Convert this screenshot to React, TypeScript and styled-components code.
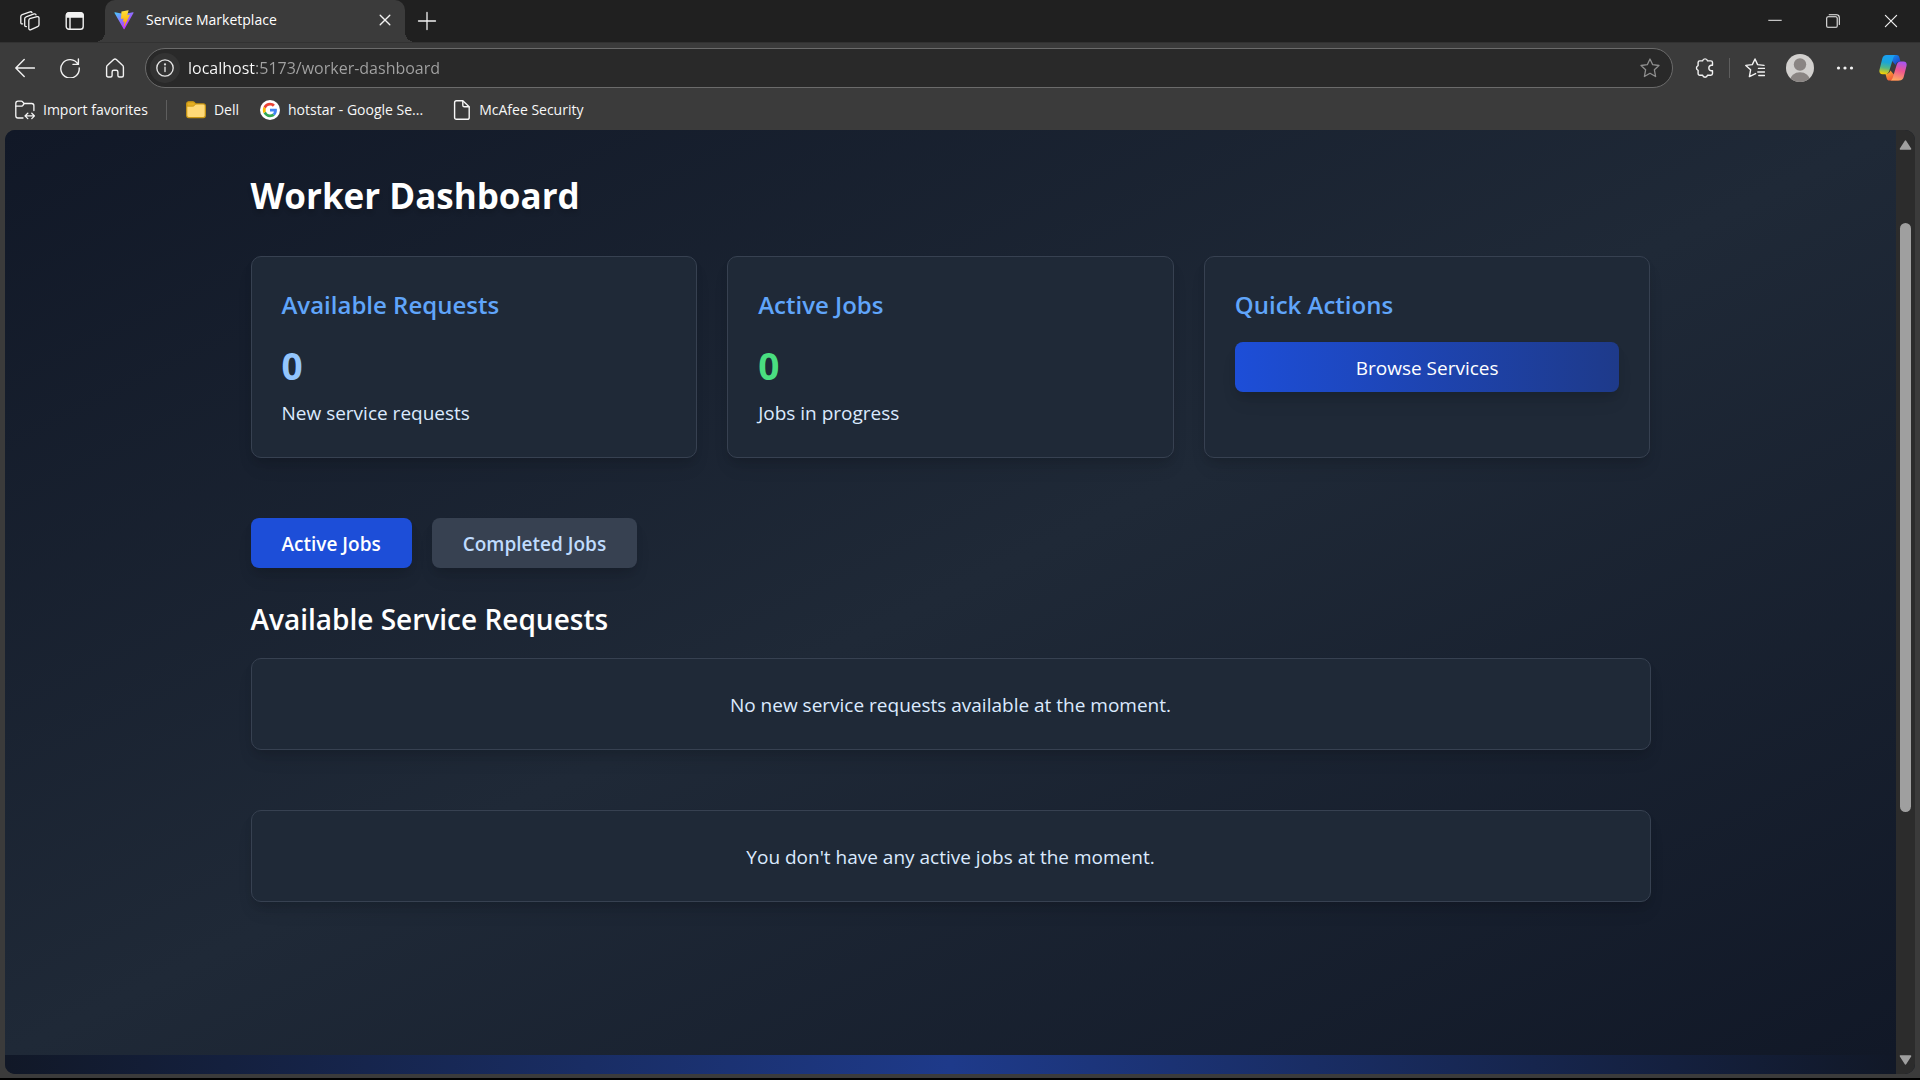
import React, { useState } from "react";
import styled, { createGlobalStyle, css } from "styled-components";

const GlobalStyle = createGlobalStyle`
  *, *::before, *::after { box-sizing: border-box; }
  body { margin: 0; background: #000; }
  h1, h2, p { margin: 0; }
  button, input { font: inherit; color: inherit; }
`;

const Window = styled.div`
  display: flex;
  flex-direction: column;
  min-height: 100vh;
  background: #3b3b3b;
  border-bottom: 2px solid #000;
  color: #fff;
  font-family: "Open Sans", "Noto Sans", sans-serif;
`;

/* ---------- browser chrome ---------- */

const TitleBar = styled.header`
  display: flex;
  align-items: stretch;
  height: 42px;
  padding-left: 7px;
  background: #202020;
`;

const IconButton = styled.button<{ $w?: number; $dim?: boolean }>`
  display: flex;
  flex: none;
  align-items: center;
  justify-content: center;
  width: ${(p) => p.$w ?? 45}px;
  padding: 0;
  border: 0;
  background: none;
  color: ${(p) => (p.$dim ? "#8f8f8f" : "#f2f2f2")};
`;

const Tab = styled.div`
  position: relative;
  display: flex;
  align-items: center;
  gap: 12px;
  width: 300px;
  margin-left: 8px;
  padding: 0 8px 2px 9px;
  border-radius: 10px 10px 0 0;
  background: #3b3b3b;
  font-size: 14px;
  line-height: 20px;

  &::before,
  &::after {
    content: "";
    position: absolute;
    bottom: 0;
    width: 10px;
    height: 10px;
  }
  &::before {
    left: -10px;
    background: radial-gradient(circle at 0 0, #202020 10px, #3b3b3b 10px);
  }
  &::after {
    right: -10px;
    background: radial-gradient(circle at 100% 0, #202020 10px, #3b3b3b 10px);
  }
`;

const TabTitle = styled.span`
  flex: 1;
  white-space: nowrap;
`;

const WindowControls = styled.div`
  display: flex;
  margin-left: auto;
`;

const Toolbar = styled.div`
  display: flex;
  align-items: center;
  height: 52px;
  padding: 0 4px 1px 2px;
  border-top: 1px solid #323232;
`;

const AddressBar = styled.label`
  display: flex;
  flex: 1;
  align-items: center;
  height: 40px;
  margin: 0 8px;
  padding: 0 2px 0 4px;
  border: 1px solid #6b6b6b;
  border-radius: 20px;
  background: #292929;
`;

const SiteInfo = styled.button`
  display: flex;
  align-items: center;
  justify-content: center;
  width: 30px;
  height: 30px;
  padding: 0;
  border: 0;
  border-radius: 50%;
  background: #333;
  color: #e4e4e4;
`;

const AddressInput = styled.input`
  flex: 1;
  min-width: 0;
  margin-left: 8px;
  padding: 0;
  border: 0;
  outline: 0;
  background: linear-gradient(90deg, #fff 67px, #a3a3a3 67px);
  background-clip: text;
  -webkit-background-clip: text;
  -webkit-text-fill-color: transparent;
  color: #a3a3a3;
  font-size: 16px;
  line-height: 24px;
`;

const Divider = styled.span`
  flex: none;
  width: 1px;
  height: 20px;
  background: #5e5e5e;
`;

const Favorites = styled.nav`
  display: flex;
  align-items: center;
  height: 36px;
  padding: 0 15px 4px;
  font-size: 14px;
  line-height: 20px;
`;

const Favorite = styled.a<{ $before?: number }>`
  display: flex;
  align-items: center;
  gap: 8px;
  margin-left: ${(p) => p.$before ?? 0}px;
  color: #f7f7f7;
  text-decoration: none;
  white-space: nowrap;
`;

const FavoriteDivider = styled(Divider)`
  margin-left: 18px;
`;

/* ---------- page ---------- */

const Viewport = styled.div`
  display: flex;
  flex: 1;
  margin: 0 5px 4px;
  overflow: hidden;
  border-radius: 10px;
  background: #111827;
`;

const Page = styled.div`
  display: flex;
  flex: 1;
  flex-direction: column;
`;

const Main = styled.main`
  flex: 1;
  padding: 42px 40px;
  background: linear-gradient(to bottom right, #111827, #1f2937, #111827);
`;

const Container = styled.div`
  display: flex;
  flex-direction: column;
  max-width: 1400px;
  margin: 0 auto;
`;

const PageFooter = styled.footer`
  height: 19px;
  background: linear-gradient(to right, #111827, #1e3a8a, #111827);
`;

const panel = css`
  padding: 30px 30px 28px;
  border: 1px solid #374151;
  border-radius: 10px;
  background: #1f2937;
  box-shadow: 0 12px 18px -4px rgba(0, 0, 0, 0.1), 0 5px 8px -2px rgba(0, 0, 0, 0.1);
`;

const Title = styled.h1`
  margin-bottom: 36px;
  font-size: 35px;
  font-weight: 700;
  line-height: 48px;
  text-shadow: 0 4px 4px rgba(0, 0, 0, 0.15);
`;

const Cards = styled.div`
  display: grid;
  grid-template-columns: repeat(3, 1fr);
  gap: 30px;
  margin-bottom: 60px;
`;

const Card = styled.section`
  ${panel}
`;

const CardTitle = styled.h2`
  margin-bottom: 19px;
  color: #60a5fa;
  font-size: 24px;
  font-weight: 600;
  line-height: 36px;
`;

const Count = styled.p<{ $color: string }>`
  margin-bottom: 7px;
  color: ${(p) => p.$color};
  font-size: 37px;
  font-weight: 700;
  line-height: 48px;
`;

const Body = styled.p`
  color: #dbeafe;
  font-size: 19px;
  line-height: 32px;
`;

const actionButton = css`
  height: 50px;
  padding: 2px 31px 0;
  border: 0;
  border-radius: 8px;
  font-size: 19px;
  line-height: 30px;
  box-shadow: 0 12px 18px -4px rgba(0, 0, 0, 0.1), 0 5px 8px -2px rgba(0, 0, 0, 0.1);
`;

const BrowseButton = styled.button`
  ${actionButton}
  width: 100%;
  background: linear-gradient(to right, #1d4ed8, #1e3a8a);
  color: #fff;
`;

const Tabs = styled.div`
  display: flex;
  gap: 20px;
  margin-bottom: 30px;
`;

const TabButton = styled.button<{ $active: boolean }>`
  ${actionButton}
  background: ${(p) => (p.$active ? "#1d4ed8" : "#374151")};
  color: ${(p) => (p.$active ? "#fff" : "#bfdbfe")};
  font-weight: 600;
`;

const SectionTitle = styled.h2`
  margin-bottom: 18px;
  font-size: 28px;
  font-weight: 600;
  line-height: 42px;
`;

const EmptyPanel = styled.div`
  ${panel}
  text-align: center;

  & + & {
    margin-top: 60px;
  }
`;

const ScrollTrack = styled.div`
  display: flex;
  flex: none;
  flex-direction: column;
  align-items: center;
  width: 19px;
  padding: 10px 0 9px;
  background: #2c2c2c;
`;

const ScrollRun = styled.div`
  display: flex;
  flex: 1;
  flex-direction: column;
  align-items: center;
  margin: 5px 0;
`;

const ScrollSpace = styled.span<{ $grow: number }>`
  flex: ${(p) => p.$grow} 0 0;
`;

const ScrollThumb = styled.span`
  flex: 589 0 0;
  width: 11px;
  border-radius: 6px;
  background: #9f9f9f;
`;

/* ---------- icons ---------- */

type StrokeProps = { size?: number; width?: number; children: React.ReactNode };

const Stroke = ({ size = 20, width = 1.4, children }: StrokeProps) => (
  <svg
    width={size}
    height={size}
    viewBox="0 0 20 20"
    fill="none"
    stroke="currentColor"
    strokeWidth={width}
    strokeLinecap="round"
    strokeLinejoin="round"
    aria-hidden="true"
  >
    {children}
  </svg>
);

const WorkspacesIcon = () => (
  <Stroke width={1.3}>
    <path d="M9.8 7.6l7.2-1.9c1.1-.3 2 .3 2 1.4v6.6c0 .9-.5 1.6-1.4 1.9l-6.6 3.1c-1.1.5-2.200-.1-2.200-1.300V9.400c0-.9.300-1.500 1-1.800z" />
    <path d="M6.4 15.600c-1.100.2-1.700-.4-1.700-1.400V7.800c0-1 .5-1.700 1.400-2l8-2.900c1-.3 1.700.1 1.900 1" />
    <path d="M2.600 12.900C1.400 13.100.8 12.500.8 11.400V5.600c0-1 .5-1.700 1.400-2L10 .9c1-.3 1.700 0 2 .8" />
  </Stroke>
);

const TabActionsIcon = () => (
  <Stroke width={1.4}>
    <rect x="1.2" y="1.7" width="17" height="16.6" rx="2.8" />
    <path d="M2 3.500C2 2.500 3 2 4 2h11.500c1.500 0 2.500.7 2.500 2.500V6H2z" fill="currentColor" />
    <path d="M5 6v12" />
  </Stroke>
);

const ViteIcon = () => (
  <svg width="20" height="20" viewBox="0 0 410 404" aria-hidden="true">
    <defs>
      <linearGradient id="viteA" x1="6" y1="33" x2="235" y2="344" gradientUnits="userSpaceOnUse">
        <stop stopColor="#41d1ff" />
        <stop offset="1" stopColor="#bd34fe" />
      </linearGradient>
      <linearGradient id="viteB" x1="194" y1="9" x2="236" y2="293" gradientUnits="userSpaceOnUse">
        <stop stopColor="#ffea83" />
        <stop offset=".08" stopColor="#ffdd35" />
        <stop offset="1" stopColor="#ffa800" />
      </linearGradient>
    </defs>
    <path
      fill="url(#viteA)"
      d="M399.641 59.525L215.643 388.545C211.844 395.338 202.084 395.378 198.228 388.618L10.582 59.556C6.381 52.190 12.680 43.267 21.028 44.759L205.223 77.682C206.398 77.892 207.601 77.890 208.776 77.676L389.119 44.806C397.439 43.289 403.768 52.143 399.641 59.525Z"
    />
    <path
      fill="url(#viteB)"
      d="M292.965 1.574L156.801 28.255C154.563 28.694 152.906 30.590 152.771 32.866L144.395 174.330C144.198 177.662 147.258 180.248 150.510 179.498L188.420 170.749C191.967 169.931 195.172 173.055 194.443 176.622L183.180 231.775C182.422 235.487 185.907 238.661 189.532 237.560L212.947 230.446C216.577 229.344 220.065 232.527 219.297 236.242L201.398 322.875C200.278 328.294 207.486 331.249 210.492 326.603L212.500 323.500L323.454 102.072C325.312 98.365 322.108 94.137 318.036 94.923L279.014 102.454C275.347 103.161 272.227 99.746 273.262 96.158L298.731 7.867C299.767 4.273 296.636.855 292.965 1.574Z"
    />
  </svg>
);

const CloseIcon = ({ size = 12, width = 2.3 }: { size?: number; width?: number }) => (
  <Stroke size={size} width={width}>
    <path d="M2 2l16 16M18 2L2 18" />
  </Stroke>
);

const PlusIcon = () => (
  <Stroke width={1.3}>
    <path d="M10 1.500v17M1.500 10h17" />
  </Stroke>
);

const MinimizeIcon = () => (
  <Stroke size={14} width={1.4}>
    <path d="M1 9h18" />
  </Stroke>
);

const RestoreIcon = () => (
  <Stroke size={14} width={1.5}>
    <rect x="1" y="4" width="15" height="15" rx="2" />
    <path d="M4.500 1.200H15c2.500 0 4 1.500 4 4V15" />
  </Stroke>
);

const BackIcon = () => (
  <Stroke>
    <path d="M19.400 10H1M9.200 1.600L.8 10l8.400 8.400" />
  </Stroke>
);

const ReloadIcon = () => (
  <Stroke>
    <path d="M18 6.200A9.200 9.200 0 1 0 19.200 10M18.400 1v5.400H13" />
  </Stroke>
);

const HomeIcon = () => (
  <Stroke>
    <path d="M1.600 9.200c0-.8.300-1.400.9-1.900l6.200-5.800c.8-.7 1.800-.7 2.600 0l6.200 5.800c.6.5.9 1.100.9 1.900v8.300c0 .9-.6 1.500-1.500 1.500h-2.500c-.9 0-1.500-.6-1.500-1.500v-3.600c0-1-.7-1.700-1.700-1.700H8.800c-1 0-1.700.7-1.700 1.700v3.600c0 .9-.6 1.500-1.500 1.500H3.100c-.9 0-1.500-.6-1.500-1.500z" />
  </Stroke>
);

const InfoIcon = () => (
  <Stroke size={18} width={1.5}>
    <circle cx="10" cy="10" r="9.1" />
    <path d="M10 9v5" />
    <circle cx="10" cy="6.1" r=".5" fill="currentColor" />
  </Stroke>
);

const StarIcon = () => (
  <Stroke width={1.3}>
    <path d="M10 1l2.700 5.700 6.300.8-4.600 4.300 1.200 6.700L10 15.300l-5.600 3.200 1.200-6.700L1 7.500l6.300-.8z" />
  </Stroke>
);

const ExtensionIcon = () => (
  <Stroke>
    <path d="M4.800 2.900h2.800a2.500 2.500 0 0 1 4.900 0h3.300c1.100 0 1.700.7 1.700 1.700v2.700h-1.400a2.800 2.800 0 0 0 0 5.500h1.400v2.700c0 1-.6 1.700-1.700 1.700h-3.300a2.500 2.500 0 0 1-4.900 0H4.800c-1 0-1.700-.7-1.700-1.700v-3.200a2.500 2.500 0 0 1 0-4.700V4.600c0-1 .7-1.700 1.700-1.700z" />
  </Stroke>
);

const FavoritesListIcon = () => (
  <Stroke>
    <path d="M10.600 15.600l-6.200 3 1.200-6.800L.8 7.400l6.500-.8L10 1l2.600 5.600 6.400.8" />
    <path d="M13.500 10.400h6M12.800 14h6.700M13.800 17.500h5.700" />
  </Stroke>
);

const AvatarIcon = () => (
  <svg width="28" height="28" viewBox="0 0 28 28" aria-hidden="true">
    <clipPath id="avatarClip">
      <circle cx="14" cy="14" r="14" />
    </clipPath>
    <g clipPath="url(#avatarClip)">
      <rect width="28" height="28" fill="#d2d0ce" />
      <circle cx="14" cy="10.5" r="6.2" fill="#8a8583" />
      <ellipse cx="14" cy="26.5" rx="10" ry="8.2" fill="#8a8583" />
    </g>
  </svg>
);

const MoreIcon = () => (
  <svg width="18" height="18" viewBox="0 0 18 18" fill="currentColor" aria-hidden="true">
    <circle cx="2.5" cy="9" r="1.6" />
    <circle cx="9" cy="9" r="1.6" />
    <circle cx="15.5" cy="9" r="1.6" />
  </svg>
);

const CopilotIcon = () => (
  <svg width="28" height="28" viewBox="0 0 28 28" aria-hidden="true">
    <defs>
      <linearGradient id="copA" x1="8" y1="2" x2="5" y2="20" gradientUnits="userSpaceOnUse">
        <stop stopColor="#1a9ff0" />
        <stop offset=".35" stopColor="#1aa5d8" />
        <stop offset=".65" stopColor="#52b788" />
        <stop offset="1" stopColor="#f7d000" />
      </linearGradient>
      <linearGradient id="copB" x1="23" y1="8" x2="18" y2="27" gradientUnits="userSpaceOnUse">
        <stop stopColor="#a855f0" />
        <stop offset=".45" stopColor="#ee5590" />
        <stop offset="1" stopColor="#ffac5c" />
      </linearGradient>
      <linearGradient id="copC" x1="15" y1="1" x2="21" y2="9" gradientUnits="userSpaceOnUse">
        <stop stopColor="#1687e8" />
        <stop offset="1" stopColor="#1e40c8" />
      </linearGradient>
      <linearGradient id="copD" x1="7" y1="20" x2="12" y2="27" gradientUnits="userSpaceOnUse">
        <stop stopColor="#f8a030" />
        <stop offset="1" stopColor="#f0503a" />
      </linearGradient>
    </defs>
    <path fill="url(#copC)" d="M8 1h9.500c1.500 0 2.400.9 2.800 2.300l1.200 4.200c-2.500 0-4.300 1-5 3.500z" />
    <path fill="url(#copD)" d="M20 26.600h-9.500c-1.500 0-2.400-.9-2.800-2.300L6.500 20c2.500 0 4.300-1 5-3.400z" />
    <path fill="url(#copA)" d="M7.500 1H17c-1.500.2-2.300 1.500-2.800 3l-4 13c-.6 2-2 3.200-3.900 3.200H3.500C1 20.200-.1 18.300.5 15.800L3.300 4.500C3.900 2.300 5.300 1 7.500 1z" />
    <path fill="url(#copB)" d="M20.500 26.600H11c1.500-.2 2.300-1.500 2.800-3l4-13c.6-2 2-3.100 3.900-3.100h2.800c2.500 0 3.600 1.900 3 4.400l-2.800 11.200c-.6 2.200-2 3.500-4.200 3.500z" />
  </svg>
);

const ImportIcon = () => (
  <Stroke width={1.3}>
    <path d="M8 18H3c-1.400 0-2.200-.8-2.200-2.200V3.400C.8 2 1.600 1.200 3 1.200h3.200c.7 0 1.200.3 1.600.8l1.300 1.500h7.600c1.400 0 2.200.8 2.200 2.200v4.800" />
    <path d="M1 6.200h5c.8 0 1.300-.2 1.800-.7l1.300-1.800M10.500 15.900h8.700M12.800 13.200L10 15.900l2.800 2.700M16.800 13.200l2.700 2.700-2.700 2.700" />
  </Stroke>
);

const FolderIcon = () => (
  <svg width="20" height="20" viewBox="0 0 20 20" aria-hidden="true">
    <path d="M.7 4c0-1.400.7-2.200 2-2.200h4.200c.7 0 1.200.3 1.600.8l1 1.300h7.800c1.300 0 2 .8 2 2v9.700c0 1.300-.7 2-2 2H2.700c-1.300 0-2-.7-2-2z" fill="#ffd977" stroke="#c99612" strokeWidth="1.2" />
    <path d="M1.200 6.200h5.600c.8 0 1.300-.3 1.700-.8l1-1.300-1.300-1.500c-.3-.2-.7-.4-1.200-.4H2.700c-1 0-1.500.6-1.500 1.600z" fill="#e5ae22" stroke="#c99612" strokeWidth=".8" />
  </svg>
);

const GoogleIcon = () => (
  <svg width="20" height="20" viewBox="0 0 20 20" aria-hidden="true">
    <circle cx="10" cy="10" r="10" fill="#fff" />
    <g transform="translate(2.8 2.8) scale(.6)">
      <path fill="#4285f4" d="M23.500 12.300c0-.9-.1-1.500-.2-2.200H12v4.500h6.500c-.1 1.100-.8 2.700-2.400 3.800l3.700 2.900c2.300-2.100 3.700-5.200 3.700-9z" />
      <path fill="#34a853" d="M12 24c3.200 0 6-1.100 7.900-2.900l-3.700-2.900c-1 .7-2.400 1.200-4.200 1.200-3.200 0-5.900-2.100-6.800-5L1.300 17.400C3.300 21.300 7.300 24 12 24z" />
      <path fill="#fbbc05" d="M5.200 14.400c-.2-.8-.4-1.600-.4-2.400s.1-1.600.4-2.400L1.300 6.600C.5 8.200 0 10.100 0 12s.5 3.800 1.300 5.400z" />
      <path fill="#ea4335" d="M12 4.700c2.300 0 3.800 1 4.700 1.800l3.400-3.300C18 1.200 15.200 0 12 0 7.300 0 3.300 2.700 1.300 6.600l3.900 3C6.100 6.800 8.800 4.700 12 4.700z" />
    </g>
  </svg>
);

const FileIcon = () => (
  <svg width="18" height="20" viewBox="0 0 18 20" fill="none" stroke="currentColor" strokeWidth="1.4" strokeLinejoin="round" aria-hidden="true">
    <path d="M3.500.8h6.300l6.400 6v10.600c0 1.200-.6 1.900-1.900 1.900H3.500c-1.300 0-1.900-.7-1.900-1.900V2.700C1.600 1.500 2.200.8 3.500.8z" />
    <path d="M9.800.8v4.400c0 1 .5 1.600 1.600 1.600h4.800" />
  </svg>
);

const ScrollArrow = ({ down = false }: { down?: boolean }) => (
  <svg width="13" height="10" viewBox="0 0 13 10" aria-hidden="true">
    <path
      d={down ? "M1.500 1h10L6.500 8.800z" : "M1.500 9h10L6.500 1.200z"}
      fill="#9f9f9f"
      stroke="#9f9f9f"
      strokeWidth="1.6"
      strokeLinejoin="round"
    />
  </svg>
);

/* ---------- app ---------- */

const BrowserChrome = () => (
  <>
    <TitleBar>
      <IconButton aria-label="Workspaces"><WorkspacesIcon /></IconButton>
      <IconButton aria-label="Tab actions menu"><TabActionsIcon /></IconButton>
      <Tab>
        <ViteIcon />
        <TabTitle>Service Marketplace</TabTitle>
        <IconButton $w={24} aria-label="Close tab"><CloseIcon /></IconButton>
      </Tab>
      <IconButton $w={43} aria-label="New tab"><PlusIcon /></IconButton>
      <WindowControls>
        <IconButton $w={58} aria-label="Minimize"><MinimizeIcon /></IconButton>
        <IconButton $w={58} aria-label="Restore"><RestoreIcon /></IconButton>
        <IconButton $w={58} aria-label="Close window"><CloseIcon size={14} width={1.7} /></IconButton>
      </WindowControls>
    </TitleBar>
    <Toolbar>
      <IconButton aria-label="Back"><BackIcon /></IconButton>
      <IconButton aria-label="Refresh"><ReloadIcon /></IconButton>
      <IconButton aria-label="Home"><HomeIcon /></IconButton>
      <AddressBar>
        <SiteInfo aria-label="Site information"><InfoIcon /></SiteInfo>
        <AddressInput aria-label="Address" defaultValue="localhost:5173/worker-dashboard" />
        <IconButton $w={40} $dim aria-label="Add to favorites"><StarIcon /></IconButton>
      </AddressBar>
      <IconButton $w={48} aria-label="Extensions"><ExtensionIcon /></IconButton>
      <Divider />
      <IconButton $w={50} aria-label="Favorites"><FavoritesListIcon /></IconButton>
      <IconButton $w={40} aria-label="Profile"><AvatarIcon /></IconButton>
      <IconButton $w={50} aria-label="Settings and more"><MoreIcon /></IconButton>
      <IconButton $w={46} aria-label="Copilot"><CopilotIcon /></IconButton>
    </Toolbar>
    <Favorites aria-label="Favorites bar">
      <Favorite href="#import"><ImportIcon />Import favorites</Favorite>
      <FavoriteDivider />
      <Favorite href="#dell" $before={19}><FolderIcon />Dell</Favorite>
      <Favorite href="#hotstar" $before={21}><GoogleIcon />hotstar - Google Se...</Favorite>
      <Favorite href="#mcafee" $before={30}><FileIcon />McAfee Security</Favorite>
    </Favorites>
  </>
);

export default function App() {
  const [tab, setTab] = useState<"active" | "completed">("active");

  return (
    <Window>
      <GlobalStyle />
      <BrowserChrome />
      <Viewport>
        <Page>
          <Main>
            <Container>
              <Title>Worker Dashboard</Title>
              <Cards>
                <Card>
                  <CardTitle>Available Requests</CardTitle>
                  <Count $color="#93c5fd">0</Count>
                  <Body>New service requests</Body>
                </Card>
                <Card>
                  <CardTitle>Active Jobs</CardTitle>
                  <Count $color="#4ade80">0</Count>
                  <Body>Jobs in progress</Body>
                </Card>
                <Card>
                  <CardTitle>Quick Actions</CardTitle>
                  <BrowseButton>Browse Services</BrowseButton>
                </Card>
              </Cards>
              <Tabs>
                <TabButton $active={tab === "active"} onClick={() => setTab("active")}>
                  Active Jobs
                </TabButton>
                <TabButton $active={tab === "completed"} onClick={() => setTab("completed")}>
                  Completed Jobs
                </TabButton>
              </Tabs>
              <SectionTitle>Available Service Requests</SectionTitle>
              <EmptyPanel>
                <Body>No new service requests available at the moment.</Body>
              </EmptyPanel>
              <EmptyPanel>
                <Body>
                  {tab === "active"
                    ? "You don't have any active jobs at the moment."
                    : "You don't have any completed jobs at the moment."}
                </Body>
              </EmptyPanel>
            </Container>
          </Main>
          <PageFooter />
        </Page>
        <ScrollTrack aria-hidden="true">
          <ScrollArrow />
          <ScrollRun>
            <ScrollSpace $grow={68} />
            <ScrollThumb />
            <ScrollSpace $grow={238} />
          </ScrollRun>
          <ScrollArrow down />
        </ScrollTrack>
      </Viewport>
    </Window>
  );
}
